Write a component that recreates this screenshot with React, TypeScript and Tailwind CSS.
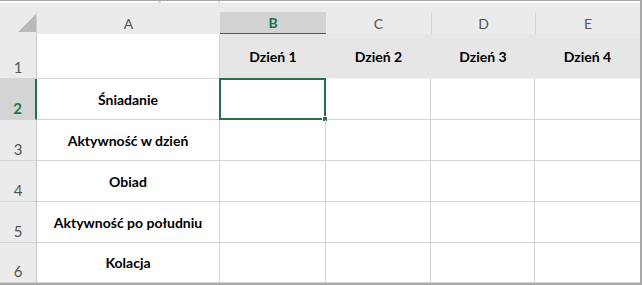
import React from "react";

const headers = ["Dzień 1", "Dzień 2", "Dzień 3", "Dzień 4"];
const labels = ["Śniadanie", "Aktywność w dzień", "Obiad", "Aktywność po południu", "Kolacja"];

const grid = "grid grid-cols-[37px_183px_106px_105px_104px_105px]";

function RowNum({ n, active, h }: { n: number; active?: boolean; h: string }) {
  return (
    <div
      className={`${h} flex items-end justify-center pb-[3px] border-b border-[#d4d4d4] ${
        active
          ? "bg-[#d4d4d4] border-r-2 border-r-[#217346] text-[#217346] font-bold"
          : "bg-[#ebebeb] border-r border-r-[#c6c6c6] text-[#555]"
      } text-[15px] leading-none`}
    >
      {n}
    </div>
  );
}

export default function App() {
  return (
    <div className="w-[642px] h-[285px] bg-white border-t border-r-2 border-b-2 border-[#a8a8a8] font-['Lato','Open_Sans',sans-serif] overflow-hidden">
      {/* formula bar remnant */}
      <div className="h-[11px] bg-[#ebebeb]">
        <div className="flex h-[2px]">
          <div className="w-[158px] bg-white" />
          <div className="w-[3px] bg-[#d8d8d8]" />
          <div className="w-[57px] bg-white" />
          <div className="w-[2px] bg-[#d8d8d8]" />
          <div className="flex-1 bg-white" />
        </div>
      </div>

      {/* column letters */}
      <div className={`${grid} h-[22px] bg-[#ebebeb] text-[14px] text-[#555]`}>
        <div className="relative border-r border-[#d0d0d0]">
          <svg className="absolute left-[18px] top-[2px]" width="18" height="18" viewBox="0 0 18 18">
            <polygon points="18,0 18,18 0,18" fill="#b9b9b9" />
          </svg>
        </div>
        <div className="flex items-center justify-center border-b border-[#f6f6f6]">A</div>
        <div className="flex items-center justify-center bg-[#d3d3d3] border-b-2 border-[#217346] text-[#217346] font-bold">
          B
        </div>
        <div className="flex items-center justify-center border-b border-[#f6f6f6]">C</div>
        <div className="flex items-center justify-center border-l border-[#d6d6d6] border-b border-b-[#f6f6f6]">D</div>
        <div className="flex items-center justify-center border-l border-[#d6d6d6] border-b border-b-[#f6f6f6]">E</div>
      </div>

      {/* row 1 */}
      <div className={`${grid} h-[45px]`}>
        <RowNum n={1} h="h-[45px]" />
        <div className="border-r border-b border-[#d4d4d4] bg-white" />
        {headers.map((t) => (
          <div
            key={t}
            className="flex items-center justify-center bg-[#e6e6e6] border-b border-[#f3f3f3] text-[14px] font-bold text-black"
          >
            {t}
          </div>
        ))}
      </div>

      {/* data rows */}
      {labels.map((label, i) => {
        const h = i === 4 ? "h-[40px]" : "h-[41px]";
        return (
          <div key={label} className={`${grid} ${h}`}>
            <RowNum n={i + 2} active={i === 0} h={h} />
            <div className="flex items-center justify-center border-r border-b border-[#d4d4d4] text-[14px] font-bold text-black">
              {label}
            </div>
            <div className="relative border-r border-b border-[#d4d4d4]">
              {i === 0 && (
                <div className="absolute -top-[1px] -left-[1px] -right-[1px] -bottom-[1px] border-2 border-[#217346]">
                  <div className="absolute -right-[4px] -bottom-[4px] w-[6px] h-[6px] bg-[#217346] border border-white" />
                </div>
              )}
            </div>
            <div className="border-r border-b border-[#d4d4d4]" />
            <div className="border-r border-b border-[#d4d4d4]" />
            <div className="border-b border-[#d4d4d4]" />
          </div>
        );
      })}
    </div>
  );
}
